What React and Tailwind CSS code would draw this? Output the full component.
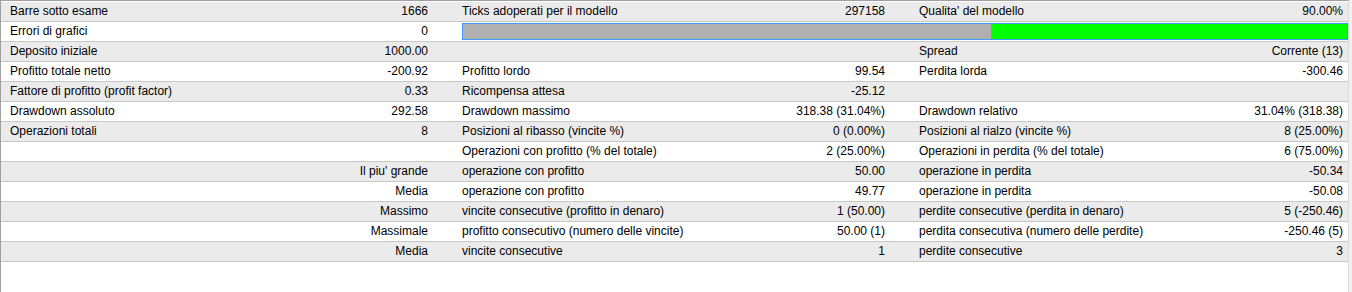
import React from 'react';

const rows = [
    ['Barre sotto esame', '1666', 'Ticks adoperati per il modello', '297158', "Qualita' del modello", '90.00%'],
    ['Errori di grafici', '0', null],
    ['Deposito iniziale', '1000.00', '', '', 'Spread', 'Corrente (13)'],
    ['Profitto totale netto', '-200.92', 'Profitto lordo', '99.54', 'Perdita lorda', '-300.46'],
    ['Fattore di profitto (profit factor)', '0.33', 'Ricompensa attesa', '-25.12', '', ''],
    ['Drawdown assoluto', '292.58', 'Drawdown massimo', '318.38 (31.04%)', 'Drawdown relativo', '31.04% (318.38)'],
    ['Operazioni totali', '8', 'Posizioni al ribasso (vincite %)', '0 (0.00%)', 'Posizioni al rialzo (vincite %)', '8 (25.00%)'],
    ['', '', 'Operazioni con profitto (% del totale)', '2 (25.00%)', 'Operazioni in perdita (% del totale)', '6 (75.00%)'],
    ['', "Il piu' grande", 'operazione con profitto', '50.00', 'operazione in perdita', '-50.34'],
    ['', 'Media', 'operazione con profitto', '49.77', 'operazione in perdita', '-50.08'],
    ['', 'Massimo', 'vincite consecutive (profitto in denaro)', '1 (50.00)', 'perdite consecutive (perdita in denaro)', '5 (-250.46)'],
    ['', 'Massimale', 'profitto consecutivo (numero delle vincite)', '50.00 (1)', 'perdita consecutiva (numero delle perdite)', '-250.46 (5)'],
    ['', 'Media', 'vincite consecutive', '1', 'perdite consecutive', '3'],
];

const Row = ({ cells, index }) => {
    const bg = index % 2 === 0 ? 'bg-[#ebebeb]' : 'bg-white';
    if (cells[2] === null) {
        return (
            <div className={`flex h-[20px] border-b border-[#c8c8c8] leading-[19px] ${bg}`}>
                <div className="w-[331px] pl-[9px]">{cells[0]}</div>
                <div className="w-[96px] text-right">{cells[1]}</div>
                <div className="flex-1 ml-[34px] mt-[1px] h-[17px] border border-[#3c9cff] flex">
                    <div className="w-[528px] bg-[#b0b0b0]" />
                    <div className="flex-1 bg-[#00ff00]" />
                </div>
            </div>
        );
    }
    return (
        <div className={`flex h-[20px] border-b border-[#c8c8c8] leading-[19px] ${bg}`}>
            <div className="w-[331px] pl-[9px]">{cells[0]}</div>
            <div className="w-[96px] text-right">{cells[1]}</div>
            <div className="w-[300px] pl-[34px]">{cells[2]}</div>
            <div className="w-[157px] text-right">{cells[3]}</div>
            <div className="w-[300px] pl-[34px]">{cells[4]}</div>
            <div className="w-[158px] text-right">{cells[5]}</div>
        </div>
    );
};

const App = () => {
    return (
        <div className="w-[1352px] h-[292px] bg-[#f0f0f0] flex overflow-hidden text-[12px] text-black" style={{ fontFamily: '"Liberation Sans", Arial, sans-serif' }}>
            <div className="w-[1349px] h-full bg-white border-t border-l border-r border-t-[#a0a0a0] border-l-[#a0a0a0] border-r-[#dcdcdc] pt-[1px]">
                {rows.map((r, i) => (
                    <Row key={i} cells={r} index={i} />
                ))}
            </div>
        </div>
    );
};

export default App;
